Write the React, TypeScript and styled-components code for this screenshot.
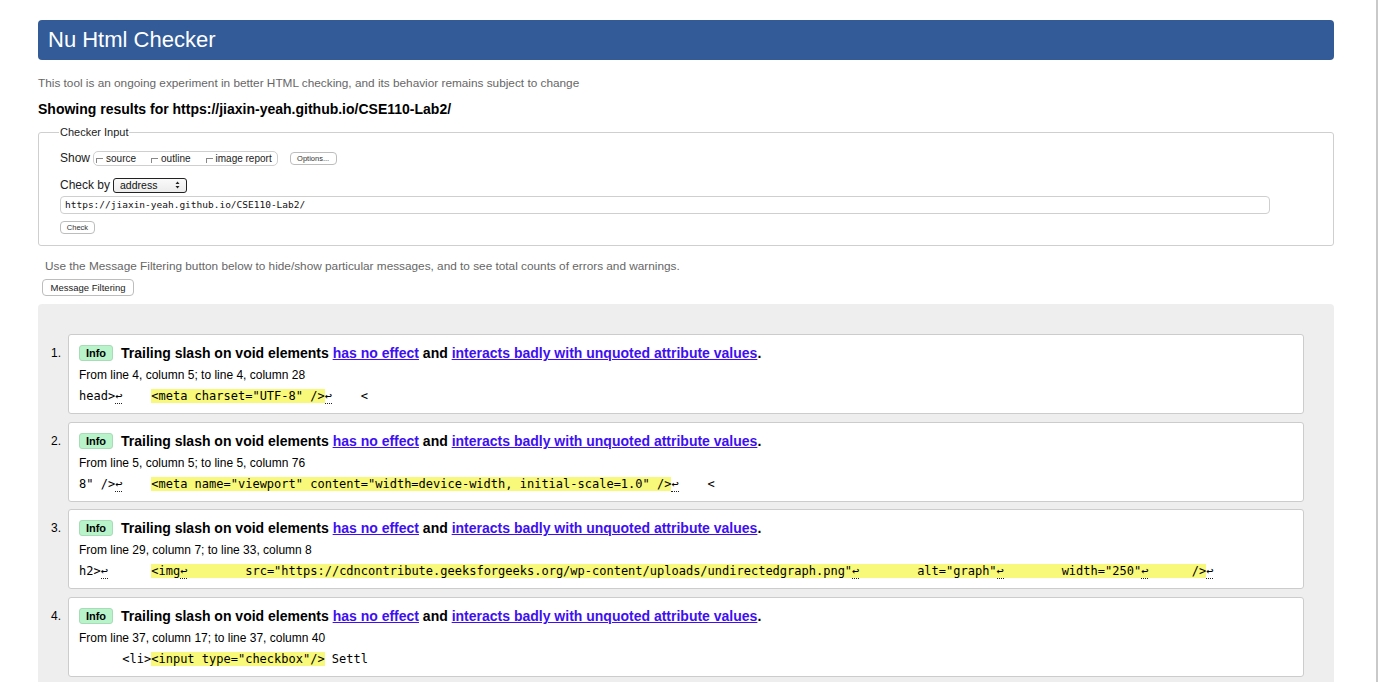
import React from "react";
import styled, { createGlobalStyle } from "styled-components";

const GlobalStyle = createGlobalStyle`
  html, body { margin: 0; padding: 0; background: #fff; }
  body { font-family: "Liberation Sans", Arial, sans-serif; color: #000; }
  * { box-sizing: border-box; }
`;

const Page = styled.div`
  display: flex;
  width: 1379px;
  height: 682px;
  overflow: hidden;
`;

const Main = styled.div`
  flex: 1;
  padding: 20px 42px 0 38px;
`;

const WindowEdge = styled.div`
  width: 2px;
  background: #c9c9c9;
  margin-right: 1px;
`;

const Header = styled.h1`
  margin: 0;
  height: 40px;
  background: #325b97;
  border-radius: 4px;
  color: #fff;
  font-size: 22px;
  font-weight: normal;
  line-height: 40px;
  padding-left: 10px;
`;

const Tagline = styled.p`
  margin: 16px 0 0;
  font-size: 11.8px;
  line-height: 14px;
  color: #666;
`;

const Showing = styled.h2`
  margin: 10px 0 0;
  font-size: 14px;
  line-height: 18px;
  font-weight: bold;
`;

const Fieldset = styled.fieldset`
  margin: 8px 0 0;
  padding: 10px 21px 12px;
  border: 1px solid #cfcfcf;
  border-radius: 3px;
  height: 120px;
`;

const Legend = styled.legend`
  font-size: 11px;
  padding: 0 1px;
  margin-left: -1px;
  color: #222;
`;

const FormRow = styled.div<{ $mt?: number }>`
  display: flex;
  align-items: center;
  gap: 3px;
  font-size: 12px;
  margin-top: ${(p) => p.$mt ?? 0}px;
  height: 16px;
`;

const Label = styled.span`
  color: #222;
`;

const CheckGroup = styled.span`
  display: inline-flex;
  align-items: center;
  height: 15px;
  border: 1px solid #cfcfcf;
  border-radius: 5px;
  padding: 0 5px 0 2px;
  font-size: 10px;
  color: #222;
`;

const CheckItem = styled.span<{ $gap: number }>`
  display: inline-flex;
  align-items: center;
  margin-right: ${(p) => p.$gap}px;
`;

const Box = styled.span`
  display: inline-block;
  width: 7px;
  height: 5px;
  border-top: 1px solid #888;
  border-left: 1px solid #888;
  margin: 4px 3px 0 0;
`;

const SmallButton = styled.span<{ $w: number; $ml?: number }>`
  display: inline-flex;
  align-items: center;
  justify-content: center;
  width: ${(p) => p.$w}px;
  height: 13px;
  border: 1px solid #bdbdbd;
  border-radius: 4px;
  font-size: 7.5px;
  color: #333;
  margin-left: ${(p) => p.$ml ?? 0}px;
  background: #fff;
`;

const Select = styled.span`
  display: inline-flex;
  align-items: center;
  justify-content: space-between;
  width: 74px;
  height: 15px;
  border: 1px solid #222;
  border-radius: 3px;
  padding: 0 6px 0 6px;
  font-size: 10.5px;
  background: linear-gradient(#fafafa, #ececec);
  color: #111;
`;

const UrlInput = styled.div`
  margin-top: 3px;
  width: 1210px;
  height: 18px;
  border: 1px solid #cfcfcf;
  border-radius: 4px;
  font-family: "DejaVu Sans Mono", monospace;
  font-size: 9.5px;
  line-height: 16px;
  padding-left: 4px;
  color: #111;
`;

const CheckButtonRow = styled.div`
  margin-top: 2px;
  height: 13px;
`;

const Hint = styled.p`
  margin: 13px 0 0 7px;
  font-size: 11.8px;
  line-height: 14px;
  color: #666;
`;

const FilterButton = styled.span`
  display: inline-flex;
  align-items: center;
  justify-content: center;
  margin: 6px 0 0 4px;
  width: 92px;
  height: 17px;
  border: 1px solid #bdbdbd;
  border-radius: 4px;
  font-size: 9.5px;
  color: #222;
`;

const Results = styled.ol`
  list-style: none;
  margin: 8px 0 0;
  padding: 30px 30px 30px 0;
  background: #eeeeee;
  border-radius: 4px;
  display: flex;
  flex-direction: column;
  gap: 7.7px;
`;

const Item = styled.li`
  display: grid;
  grid-template-columns: 30px 1fr;
`;

const Num = styled.span`
  font-size: 12px;
  text-align: right;
  padding: 12px 7px 0 0;
  line-height: 14px;
`;

const Card = styled.div`
  background: #fff;
  border: 1px solid #cccccc;
  border-radius: 3px;
  padding: 10px 10px 9px;
  height: 80px;
`;

const TitleRow = styled.p`
  margin: 0;
  display: flex;
  align-items: center;
  font-size: 14px;
  font-weight: bold;
  height: 16px;
  white-space: pre;
`;

const Badge = styled.span`
  display: inline-flex;
  align-items: center;
  justify-content: center;
  width: 34px;
  height: 16px;
  background: #b8f3c9;
  border: 1px solid #a7dcb6;
  border-radius: 3px;
  font-size: 11px;
  font-weight: bold;
  margin-right: 8px;
`;

const Link = styled.a`
  color: #3e0ff2;
  text-decoration: underline;
`;

const Location = styled.p`
  margin: 7px 0 0;
  font-size: 12px;
  line-height: 14px;
`;

const Code = styled.p`
  margin: 7px 0 0;
  font-family: "DejaVu Sans Mono", monospace;
  font-size: 12px;
  line-height: 15px;
  white-space: pre;
  overflow: hidden;
`;

const Mark = styled.mark`
  background: #f8f87a;
  color: inherit;
`;

const Lf = styled.span`
  border-bottom: 1px dotted #222;
`;

type Seg = { t: string; hl?: boolean };

const lf = "\u21a9";

function renderCode(segs: Seg[]) {
  return segs.map((s, i) => {
    const parts = s.t.split(lf);
    const content = parts.flatMap((p, j) =>
      j === 0 ? [p] : [<Lf key={`${i}-${j}`}>{lf}</Lf>, p]
    );
    return s.hl ? <Mark key={i}>{content}</Mark> : <React.Fragment key={i}>{content}</React.Fragment>;
  });
}

const SelectArrows = () => (
  <svg width="5" height="8" viewBox="0 0 5 8" aria-hidden="true">
    <path d="M0.5 3 L2.5 0.5 L4.5 3 Z M0.5 5 L2.5 7.5 L4.5 5 Z" fill="#222" />
  </svg>
);

const messages: { loc: string; code: Seg[] }[] = [
  {
    loc: "From line 4, column 5; to line 4, column 28",
    code: [
      { t: "head>" + lf + "    " },
      { t: '<meta charset="UTF-8" />', hl: true },
      { t: lf + "    <" },
    ],
  },
  {
    loc: "From line 5, column 5; to line 5, column 76",
    code: [
      { t: '8" />' + lf + "    " },
      { t: '<meta name="viewport" content="width=device-width, initial-scale=1.0" />', hl: true },
      { t: lf + "    <" },
    ],
  },
  {
    loc: "From line 29, column 7; to line 33, column 8",
    code: [
      { t: "h2>" + lf + "      " },
      {
        t:
          "<img" + lf + "        " +
          'src="https://cdncontribute.geeksforgeeks.org/wp-content/uploads/undirectedgraph.png"' + lf + "        " +
          'alt="graph"' + lf + "        " +
          'width="250"' + lf + "      />",
        hl: true,
      },
      { t: lf },
    ],
  },
  {
    loc: "From line 37, column 17; to line 37, column 40",
    code: [
      { t: "      <li>" },
      { t: '<input type="checkbox"/>', hl: true },
      { t: " Settl" },
    ],
  },
];

export default function App() {
  return (
    <>
      <GlobalStyle />
      <Page>
        <Main>
          <Header>Nu Html Checker</Header>
          <Tagline>
            This tool is an ongoing experiment in better HTML checking, and its behavior remains subject to change
          </Tagline>
          <Showing>Showing results for https://jiaxin-yeah.github.io/CSE110-Lab2/</Showing>
          <Fieldset>
            <Legend>Checker Input</Legend>
            <FormRow $mt={2}>
              <Label>Show</Label>
              <CheckGroup>
                <CheckItem $gap={15}><Box />source</CheckItem>
                <CheckItem $gap={15}><Box />outline</CheckItem>
                <CheckItem $gap={0}><Box />image report</CheckItem>
              </CheckGroup>
              <SmallButton $w={47} $ml={9}>Options...</SmallButton>
            </FormRow>
            <FormRow $mt={11}>
              <Label>Check by</Label>
              <Select>
                address
                <SelectArrows />
              </Select>
            </FormRow>
            <UrlInput>https://jiaxin-yeah.github.io/CSE110-Lab2/</UrlInput>
            <CheckButtonRow>
              <SmallButton $w={35}>Check</SmallButton>
            </CheckButtonRow>
          </Fieldset>
          <Hint>
            Use the Message Filtering button below to hide/show particular messages, and to see total counts of errors and warnings.
          </Hint>
          <FilterButton>Message Filtering</FilterButton>
          <Results>
            {messages.map((m, i) => (
              <Item key={i}>
                <Num>{i + 1}.</Num>
                <Card>
                  <TitleRow>
                    <Badge>Info</Badge>
                    Trailing slash on void elements <Link href="#">has no effect</Link> and{" "}
                    <Link href="#">interacts badly with unquoted attribute values</Link>.
                  </TitleRow>
                  <Location>{m.loc}</Location>
                  <Code>{renderCode(m.code)}</Code>
                </Card>
              </Item>
            ))}
          </Results>
        </Main>
        <WindowEdge />
      </Page>
    </>
  );
}
